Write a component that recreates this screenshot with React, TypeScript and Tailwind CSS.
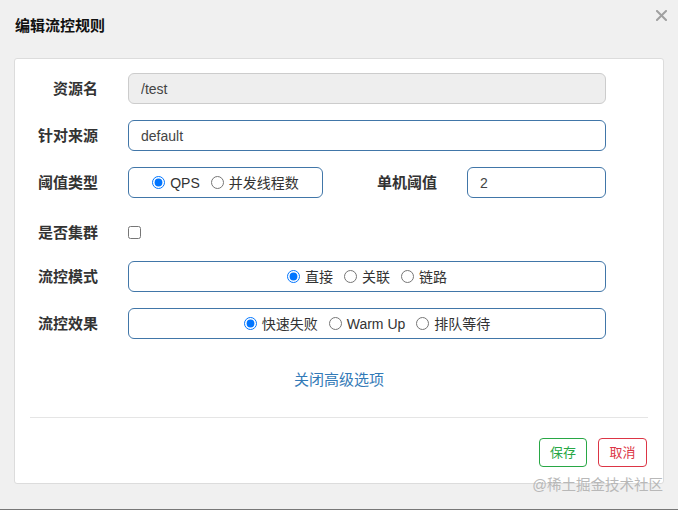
import React from 'react'

const font = { fontFamily: '"Liberation Sans", "Noto Sans CJK SC", sans-serif' }

type RadioOpt = { label: string; checked?: boolean }

function RadioGroup({ name, options, className }: { name: string; options: RadioOpt[]; className?: string }) {
  return (
    <div
      className={`flex h-[31px] items-center justify-center rounded-[6px] border border-[#4176a8] ${className ?? ''}`}
    >
      {options.map((opt, i) => (
        <label key={opt.label} className={`flex items-center text-[14px] text-[#333] ${i > 0 ? 'ml-[11px]' : ''}`}>
          <input
            type="radio"
            name={name}
            defaultChecked={opt.checked}
            className="m-0 h-[13px] w-[13px]"
          />
          <span className="ml-[5px] leading-[20px]">{opt.label}</span>
        </label>
      ))}
    </div>
  )
}

function Label({ children, className }: { children: React.ReactNode; className?: string }) {
  return (
    <div className={`text-right text-[15px] font-bold leading-[20px] text-[#333] ${className ?? ''}`}>{children}</div>
  )
}

export default function App() {
  return (
    <div className="relative h-[510px] w-full border-b border-[#777] bg-[#f0f0f0]" style={font}>
      <div className="h-[58px] pl-[15px] pt-[16px]">
        <h4 className="text-[15px] font-bold leading-[20px] text-[#111]">编辑流控规则</h4>
      </div>
      <button className="absolute right-[11px] top-[10px] h-[11px] w-[11px] text-[#a0a0a0]" aria-label="close">
        <svg viewBox="0 0 11 11" width="11" height="11">
          <path d="M1 1 L10 10 M10 1 L1 10" stroke="currentColor" strokeWidth="2" strokeLinecap="square" />
        </svg>
      </button>

      <div className="ml-[14px] h-[426px] w-[650px] rounded-[3px] border border-[#dcdcdc] bg-white pt-[14px]">
        <div className="flex flex-col gap-[16px]">
          <div className="flex items-center">
            <Label className="w-[83px]">资源名</Label>
            <input
              disabled
              value="/test"
              readOnly
              className="ml-[30px] h-[31px] w-[478px] rounded-[6px] border border-[#cccccc] bg-[#eeeeee] px-[12px] text-[14px] text-[#444]"
            />
          </div>
          <div className="flex items-center">
            <Label className="w-[83px]">针对来源</Label>
            <input
              defaultValue="default"
              className="ml-[30px] h-[31px] w-[478px] rounded-[6px] border border-[#4176a8] bg-white px-[12px] text-[14px] text-[#444] outline-none"
            />
          </div>
          <div className="flex items-center">
            <Label className="w-[83px]">阈值类型</Label>
            <RadioGroup
              name="grade"
              className="ml-[30px] w-[195px]"
              options={[{ label: 'QPS', checked: true }, { label: '并发线程数' }]}
            />
            <Label className="w-[114px]">单机阈值</Label>
            <input
              defaultValue="2"
              className="ml-[30px] h-[31px] w-[139px] rounded-[6px] border border-[#4176a8] bg-white px-[12px] text-[14px] text-[#444] outline-none"
            />
          </div>
          <div className="flex h-[31px] items-center pt-[6px]">
            <Label className="w-[83px]">是否集群</Label>
            <input type="checkbox" className="m-0 ml-[30px] h-[13px] w-[13px]" />
          </div>
          <div className="flex items-center">
            <Label className="w-[83px]">流控模式</Label>
            <RadioGroup
              name="strategy"
              className="ml-[30px] w-[478px]"
              options={[{ label: '直接', checked: true }, { label: '关联' }, { label: '链路' }]}
            />
          </div>
          <div className="flex items-center">
            <Label className="w-[83px]">流控效果</Label>
            <RadioGroup
              name="behavior"
              className="ml-[30px] w-[478px]"
              options={[{ label: '快速失败', checked: true }, { label: 'Warm Up' }, { label: '排队等待' }]}
            />
          </div>
        </div>

        <div className="mt-[31px] text-center text-[15px] leading-[20px] text-[#337ab7]">
          <a className="cursor-pointer">关闭高级选项</a>
        </div>

        <div className="mx-[15px] mt-[27px] border-t border-[#e5e5e5]" />

        <div className="mr-[16px] mt-[20px] flex justify-end gap-[11px]">
          <button className="h-[29px] w-[48px] rounded-[4px] border border-[#28a745] bg-white text-[13px] text-[#28a745]">
            保存
          </button>
          <button className="h-[29px] w-[49px] rounded-[4px] border border-[#dc3545] bg-white text-[13px] text-[#dc3545]">
            取消
          </button>
        </div>
      </div>

      <div className="absolute bottom-[15px] right-[15px] text-[14.5px] leading-[18px] text-[#b8b8b8]">
        @稀土掘金技术社区
      </div>
    </div>
  )
}
